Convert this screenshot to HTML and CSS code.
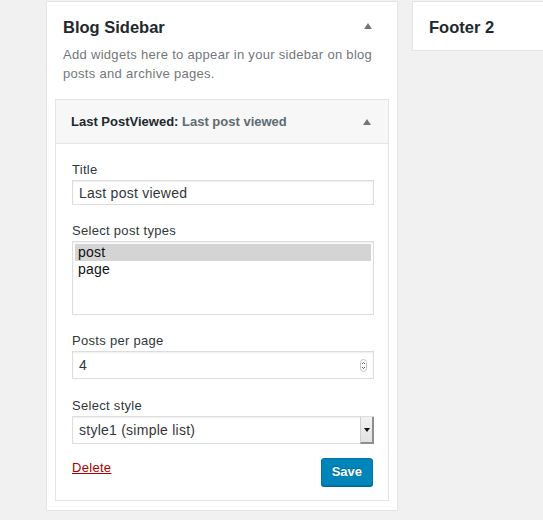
FILE: index.html
```html
<!DOCTYPE html>
<html lang="en">
<head>
<meta charset="utf-8">
<title>Widgets</title>
<link rel="stylesheet" href="styles.css">
</head>
<body>
<div class="wrap">
  <section class="sidebar">
    <div class="sidebar-head">
      <h2 class="sidebar-title">Blog Sidebar</h2>
      <svg class="toggle toggle-top" width="8" height="6" viewBox="0 0 8 6"><polygon points="4,0 8,6 0,6" fill="#72777c"/></svg>
    </div>
    <p class="sidebar-desc">Add widgets here to appear in your sidebar on blog posts and archive pages.</p>

    <div class="widget">
      <div class="widget-top">
        <h3 class="widget-title">Last PostViewed: <span class="in-title">Last post viewed</span></h3>
        <svg class="toggle" width="8" height="6" viewBox="0 0 8 6"><polygon points="4,0 8,6 0,6" fill="#72777c"/></svg>
      </div>
      <div class="widget-body">
        <div class="field">
          <label class="label" for="t">Title</label>
          <input class="text-input" id="t" type="text" value="Last post viewed">
        </div>
        <div class="field">
          <div class="label">Select post types</div>
          <div class="listbox" role="listbox">
            <div class="option selected">post</div>
            <div class="option">page</div>
          </div>
        </div>
        <div class="field">
          <label class="label" for="n">Posts per page</label>
          <div class="number-box">
            <input class="bare-input" id="n" type="text" value="4">
            <svg class="spinner" width="7" height="13" viewBox="0 0 7 13">
              <rect x="0.5" y="0.5" width="6" height="12" rx="3" fill="#fff" stroke="#c4c4c4"/>
              <polyline points="2,5 3.5,3.5 5,5" fill="none" stroke="#555" stroke-width="0.9"/>
              <polyline points="2,8 3.5,9.5 5,8" fill="none" stroke="#555" stroke-width="0.9"/>
            </svg>
          </div>
        </div>
        <div class="field field-style">
          <div class="label">Select style</div>
          <div class="select-box">
            <span class="select-value">style1 (simple list)</span>
            <span class="select-btn"><svg width="6" height="4" viewBox="0 0 6 4"><polygon points="0,0 6,0 3,4" fill="#111"/></svg></span>
          </div>
        </div>
        <div class="actions">
          <a class="delete" href="#">Delete</a>
          <button class="save" type="button">Save</button>
        </div>
      </div>
    </div>
  </section>

  <section class="footer-area">
    <h2 class="sidebar-title">Footer 2</h2>
  </section>
</div>
</body>
</html>
```

FILE: styles.css
```css
html, body {
  margin: 0;
  padding: 0;
  background: #f1f1f1;
  overflow: hidden;
}
body {
  font-family: "Liberation Sans", Arial, sans-serif;
  color: #32373c;
}
.wrap {
  display: flex;
  align-items: flex-start;
  padding: 1px 0 0 46px;
  overflow: hidden;
}
.sidebar {
  box-sizing: border-box;
  width: 352px;
  flex: none;
  background: #fff;
  border: 1px solid #e5e5e5;
  padding: 14px 8px 9px;
}
.sidebar-head {
  display: flex;
  justify-content: space-between;
  align-items: flex-start;
  padding: 0 17px 0 8px;
}
.sidebar-title {
  margin: 0;
  font-size: 16.5px;
  line-height: 22px;
  font-weight: 700;
  color: #23282d;
}
.toggle { display: block; flex: none; }
.toggle-top { margin-top: 7px; }
.sidebar-desc {
  margin: 7px 0 0;
  padding: 0 8px;
  font-size: 13px;
  line-height: 19px;
  letter-spacing: 0.3px;
  color: #72777c;
}
.widget {
  margin-top: 16px;
  border: 1px solid #e5e5e5;
  background: #fff;
}
.widget-top {
  display: flex;
  justify-content: space-between;
  align-items: center;
  background: #f7f7f7;
  border-bottom: 1px solid #e5e5e5;
  padding: 0 17px 0 15px;
  height: 43px;
}
.widget-title {
  margin: 0;
  font-size: 13px;
  line-height: 15px;
  font-weight: 700;
  color: #23282d;
}
.in-title { color: #606a73; }
.widget-body {
  padding: 17px 14px 14px 16px;
}
.field + .field { margin-top: 17px; }
.field + .field-style { margin-top: 18px; }
.label {
  display: block;
  font-size: 13px;
  line-height: 18px;
  letter-spacing: 0.3px;
  color: #32373c;
  margin-bottom: 1px;
}
.text-input {
  display: block;
  box-sizing: border-box;
  width: 100%;
  height: 25px;
  margin: 0;
  border: 1px solid #ddd;
  box-shadow: inset 0 1px 2px rgba(0,0,0,.07);
  padding: 0 6px;
  font-family: inherit;
  font-size: 14px;
  letter-spacing: 0.25px;
  color: #32373c;
  background: #fff;
  outline: none;
}
.listbox {
  box-sizing: border-box;
  height: 74px;
  border: 1px solid #ddd;
  box-shadow: inset 0 1px 2px rgba(0,0,0,.07);
  padding: 2px;
  background: #fff;
}
.option {
  height: 17px;
  line-height: 17px;
  font-size: 14px;
  padding-left: 3px;
  color: #111;
  letter-spacing: 0.2px;
}
.option.selected { background: #d4d4d4; }
.number-box, .select-box {
  box-sizing: border-box;
  display: flex;
  align-items: center;
  height: 28px;
  border: 1px solid #ddd;
  box-shadow: inset 0 1px 2px rgba(0,0,0,.07);
  background: #fff;
}
.number-box { padding: 0 6px 0 6px; }
.bare-input {
  flex: 1;
  min-width: 0;
  border: 0;
  outline: none;
  background: transparent;
  padding: 0;
  margin: 0;
  font-family: inherit;
  font-size: 14px;
  color: #32373c;
  line-height: 20px;
}
.spinner { display: block; flex: none; }
.select-box { align-items: stretch; }
.select-value {
  flex: 1;
  display: flex;
  align-items: center;
  padding-left: 6px;
  font-size: 14px;
  letter-spacing: 0.25px;
  color: #32373c;
}
.select-btn {
  box-sizing: border-box;
  flex: none;
  width: 14px;
  display: flex;
  align-items: center;
  justify-content: center;
  background: linear-gradient(#f2f2f2, #e2e2e2);
  border-left: 1px solid #cfcfcf;
  border-right: 2px solid #8f8f8f;
  border-bottom: 2px solid #8f8f8f;
  margin: 0 -1px -1px 0;
}
.actions {
  display: flex;
  justify-content: space-between;
  align-items: flex-start;
  margin-top: 14px;
}
.delete {
  font-size: 13px;
  line-height: 17px;
  letter-spacing: 0.3px;
  color: #a00;
  text-decoration: underline;
  margin-top: 1px;
}
.save {
  box-sizing: border-box;
  height: 28px;
  margin: 0 1px 0 0;
  padding: 0 10px;
  border: 1px solid #0073aa;
  border-radius: 3px;
  background: #0085ba;
  box-shadow: 0 1px 0 #006799;
  color: #fff;
  font-family: inherit;
  font-size: 13px;
  font-weight: 700;
  line-height: 26px;
  text-shadow: 0 -1px 1px #006799;
  cursor: pointer;
}
.footer-area {
  box-sizing: border-box;
  flex: 1;
  min-width: 0;
  margin: 0 -2px 0 14px;
  height: 50px;
  background: #fff;
  border: 1px solid #e5e5e5;
  padding: 14px 16px 0;
}
```
